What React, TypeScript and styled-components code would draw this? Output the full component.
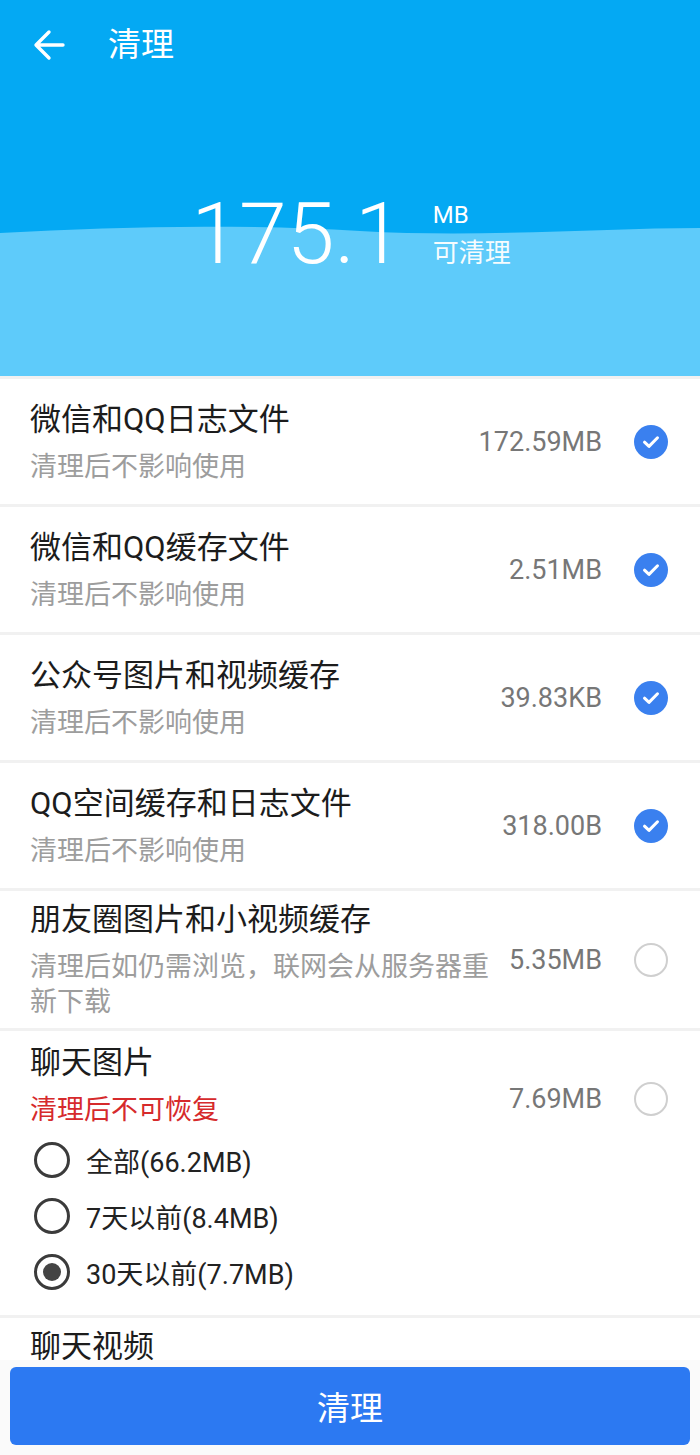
import React, { useState } from "react";
import styled, { createGlobalStyle } from "styled-components";

const GlobalStyle = createGlobalStyle`
  html, body {
    margin: 0;
    padding: 0;
    background: #fafafa;
  }
  body {
    font-family: Roboto, "Noto Sans CJK SC", sans-serif;
  }
`;

const headerBlue = "#04a9f3";
const waveBlue = "#5ecbfa";
const checkBlue = "#3a80ef";
const buttonBlue = "#2c79f2";

const waveSvg = `<svg xmlns='http://www.w3.org/2000/svg' width='700' height='376' viewBox='0 0 700 376'><rect width='700' height='376' fill='${headerBlue}'/><path d='M0 233 C 120 226 240 224 360 231 S 600 228 700 228 L700 376 L0 376 Z' fill='${waveBlue}'/></svg>`;

const Page = styled.div`
  width: 700px;
  height: 1455px;
  display: flex;
  flex-direction: column;
  overflow: hidden;
  background: #fafafa;
`;

const Header = styled.header`
  height: 376px;
  flex-shrink: 0;
  background: url("data:image/svg+xml,${encodeURIComponent(waveSvg)}")
    no-repeat;
  color: #fff;
`;

const TopBar = styled.div`
  height: 90px;
  padding-left: 33px;
  display: flex;
  align-items: center;
`;

const BackButton = styled.button`
  width: 32px;
  height: 32px;
  padding: 0;
  border: none;
  background: none;
  display: flex;
  cursor: pointer;
`;

const Title = styled.h1`
  margin: 0 0 0 43px;
  font-size: 33px;
  font-weight: 400;
  line-height: 40px;
`;

const Summary = styled.div`
  margin-top: 101px;
  display: flex;
  justify-content: center;
  align-items: flex-start;
  gap: 30px;
  padding-left: 2px;
`;

const Amount = styled.div`
  font-family: Roboto, sans-serif;
  font-size: 86px;
  font-weight: 300;
  line-height: 1;
`;

const Unit = styled.div`
  margin-top: 10px;
  display: flex;
  flex-direction: column;
  gap: 7px;
`;

const UnitMain = styled.div`
  font-size: 24px;
  line-height: 28px;
`;

const UnitSub = styled.div`
  font-size: 26px;
  line-height: 34px;
  opacity: 0.95;
`;

const List = styled.ul`
  margin: 0;
  padding: 0;
  list-style: none;
  flex: 1;
  overflow: hidden;
  background: #fff;
`;

// $pad: [top, bottom] for rows that start at the top instead of centring
const Item = styled.li<{ $pad?: [number, number] }>`
  box-sizing: border-box;
  min-height: 128px;
  padding: ${(p) => (p.$pad ? p.$pad[0] : 8)}px 32px
    ${(p) => (p.$pad ? p.$pad[1] : 8)}px 30px;
  border-top: solid 3px #f1f1f1;
  display: flex;
  flex-direction: column;
  justify-content: ${(p) => (p.$pad ? "flex-start" : "center")};
`;

const Head = styled.div`
  display: flex;
  align-items: center;
`;

const Texts = styled.div`
  flex: 1;
  display: flex;
  flex-direction: column;
  gap: 9px;
`;

const ItemTitle = styled.div`
  font-size: 31px;
  line-height: 42px;
  color: #1c1c1c;
`;

const ItemNote = styled.div<{ $warn?: boolean }>`
  max-width: 465px;
  font-size: 27px;
  line-height: 35px;
  color: ${(p) => (p.$warn ? "#d62a2c" : "#9d9d9d")};
`;

const Side = styled.div<{ $offset?: number }>`
  margin-top: ${(p) => p.$offset || 0}px;
  display: flex;
  align-items: center;
  gap: 32px;
`;

const Size = styled.div`
  font-family: Roboto, sans-serif;
  font-size: 27px;
  color: #777;
  white-space: nowrap;
`;

const Check = styled.button<{ $checked: boolean }>`
  width: 34px;
  height: 34px;
  padding: 0;
  box-sizing: border-box;
  border-radius: 50%;
  border: ${(p) => (p.$checked ? "none" : "solid 2px #cfcfcf")};
  background: ${(p) => (p.$checked ? checkBlue : "#fff")};
  display: flex;
  align-items: center;
  justify-content: center;
  cursor: pointer;
`;

const Options = styled.div`
  margin-top: 4px;
  margin-left: 4px;
  display: flex;
  flex-direction: column;
`;

const Option = styled.label`
  height: 56px;
  display: flex;
  align-items: center;
  gap: 16px;
  font-size: 27px;
  color: #222;
  cursor: pointer;
`;

const Radio = styled.span<{ $selected: boolean }>`
  width: 36px;
  height: 36px;
  box-sizing: border-box;
  border-radius: 50%;
  border: solid 3px #3b3b3b;
  display: flex;
  align-items: center;
  justify-content: center;
  &::after {
    content: "";
    width: 18px;
    height: 18px;
    border-radius: 50%;
    background: ${(p) => (p.$selected ? "#444" : "transparent")};
  }
`;

const Footer = styled.div`
  flex-shrink: 0;
  padding: 7px 10px 10px;
  background: #fafafa;
`;

const CleanButton = styled.button`
  width: 100%;
  height: 78px;
  border: none;
  border-radius: 6px;
  background: ${buttonBlue};
  color: #fff;
  font-family: "Noto Sans CJK SC", sans-serif;
  font-size: 33px;
  cursor: pointer;
`;

interface Entry {
  title: string;
  note: string;
  size: string;
  checked: boolean;
}

const entries: Entry[] = [
  { title: "微信和QQ日志文件", note: "清理后不影响使用", size: "172.59MB", checked: true },
  { title: "微信和QQ缓存文件", note: "清理后不影响使用", size: "2.51MB", checked: true },
  { title: "公众号图片和视频缓存", note: "清理后不影响使用", size: "39.83KB", checked: true },
  { title: "QQ空间缓存和日志文件", note: "清理后不影响使用", size: "318.00B", checked: true },
  {
    title: "朋友圈图片和小视频缓存",
    note: "清理后如仍需浏览，联网会从服务器重新下载",
    size: "5.35MB",
    checked: false,
  },
];

const ranges = ["全部(66.2MB)", "7天以前(8.4MB)", "30天以前(7.7MB)"];

const CheckMark = () => (
  <svg width="18" height="14" viewBox="0 0 18 14">
    <path
      d="M2.5 7.2 L7 11.4 L15.5 2.8"
      fill="none"
      stroke="#fff"
      strokeWidth="3"
      strokeLinecap="round"
      strokeLinejoin="round"
    />
  </svg>
);

const App = () => {
  const [checked, setChecked] = useState(entries.map((e) => e.checked));
  const [chatChecked, setChatChecked] = useState(false);
  const [range, setRange] = useState(2);

  const toggle = (index: number) =>
    setChecked(checked.map((c, i) => (i === index ? !c : c)));

  return (
    <Page>
      <GlobalStyle />
      <Header>
        <TopBar>
          <BackButton aria-label="返回">
            <svg width="32" height="32" viewBox="0 0 32 32">
              <path
                d="M30 16 H4 M16 3 L3 16 L16 29"
                fill="none"
                stroke="#fff"
                strokeWidth="3.4"
                strokeLinecap="round"
                strokeLinejoin="round"
              />
            </svg>
          </BackButton>
          <Title>清理</Title>
        </TopBar>
        <Summary>
          <Amount>175.1</Amount>
          <Unit>
            <UnitMain>MB</UnitMain>
            <UnitSub>可清理</UnitSub>
          </Unit>
        </Summary>
      </Header>
      <List>
        {entries.map((entry, index) => (
          <Item key={entry.title}>
            <Head>
              <Texts>
                <ItemTitle>{entry.title}</ItemTitle>
                <ItemNote>{entry.note}</ItemNote>
              </Texts>
              <Side>
                <Size>{entry.size}</Size>
                <Check $checked={checked[index]} onClick={() => toggle(index)}>
                  {checked[index] && <CheckMark />}
                </Check>
              </Side>
            </Head>
          </Item>
        ))}
        <Item $pad={[11, 15]}>
          <Head>
            <Texts>
              <ItemTitle>聊天图片</ItemTitle>
              <ItemNote $warn>清理后不可恢复</ItemNote>
            </Texts>
            <Side $offset={28}>
              <Size>7.69MB</Size>
              <Check $checked={chatChecked} onClick={() => setChatChecked(!chatChecked)}>
                {chatChecked && <CheckMark />}
              </Check>
            </Side>
          </Head>
          <Options>
            {ranges.map((label, index) => (
              <Option key={label} onClick={() => setRange(index)}>
                <Radio $selected={range === index} />
                {label}
              </Option>
            ))}
          </Options>
        </Item>
        <Item $pad={[8, 8]}>
          <Head>
            <Texts>
              <ItemTitle>聊天视频</ItemTitle>
            </Texts>
          </Head>
        </Item>
      </List>
      <Footer>
        <CleanButton>清理</CleanButton>
      </Footer>
    </Page>
  );
};

export default App;
